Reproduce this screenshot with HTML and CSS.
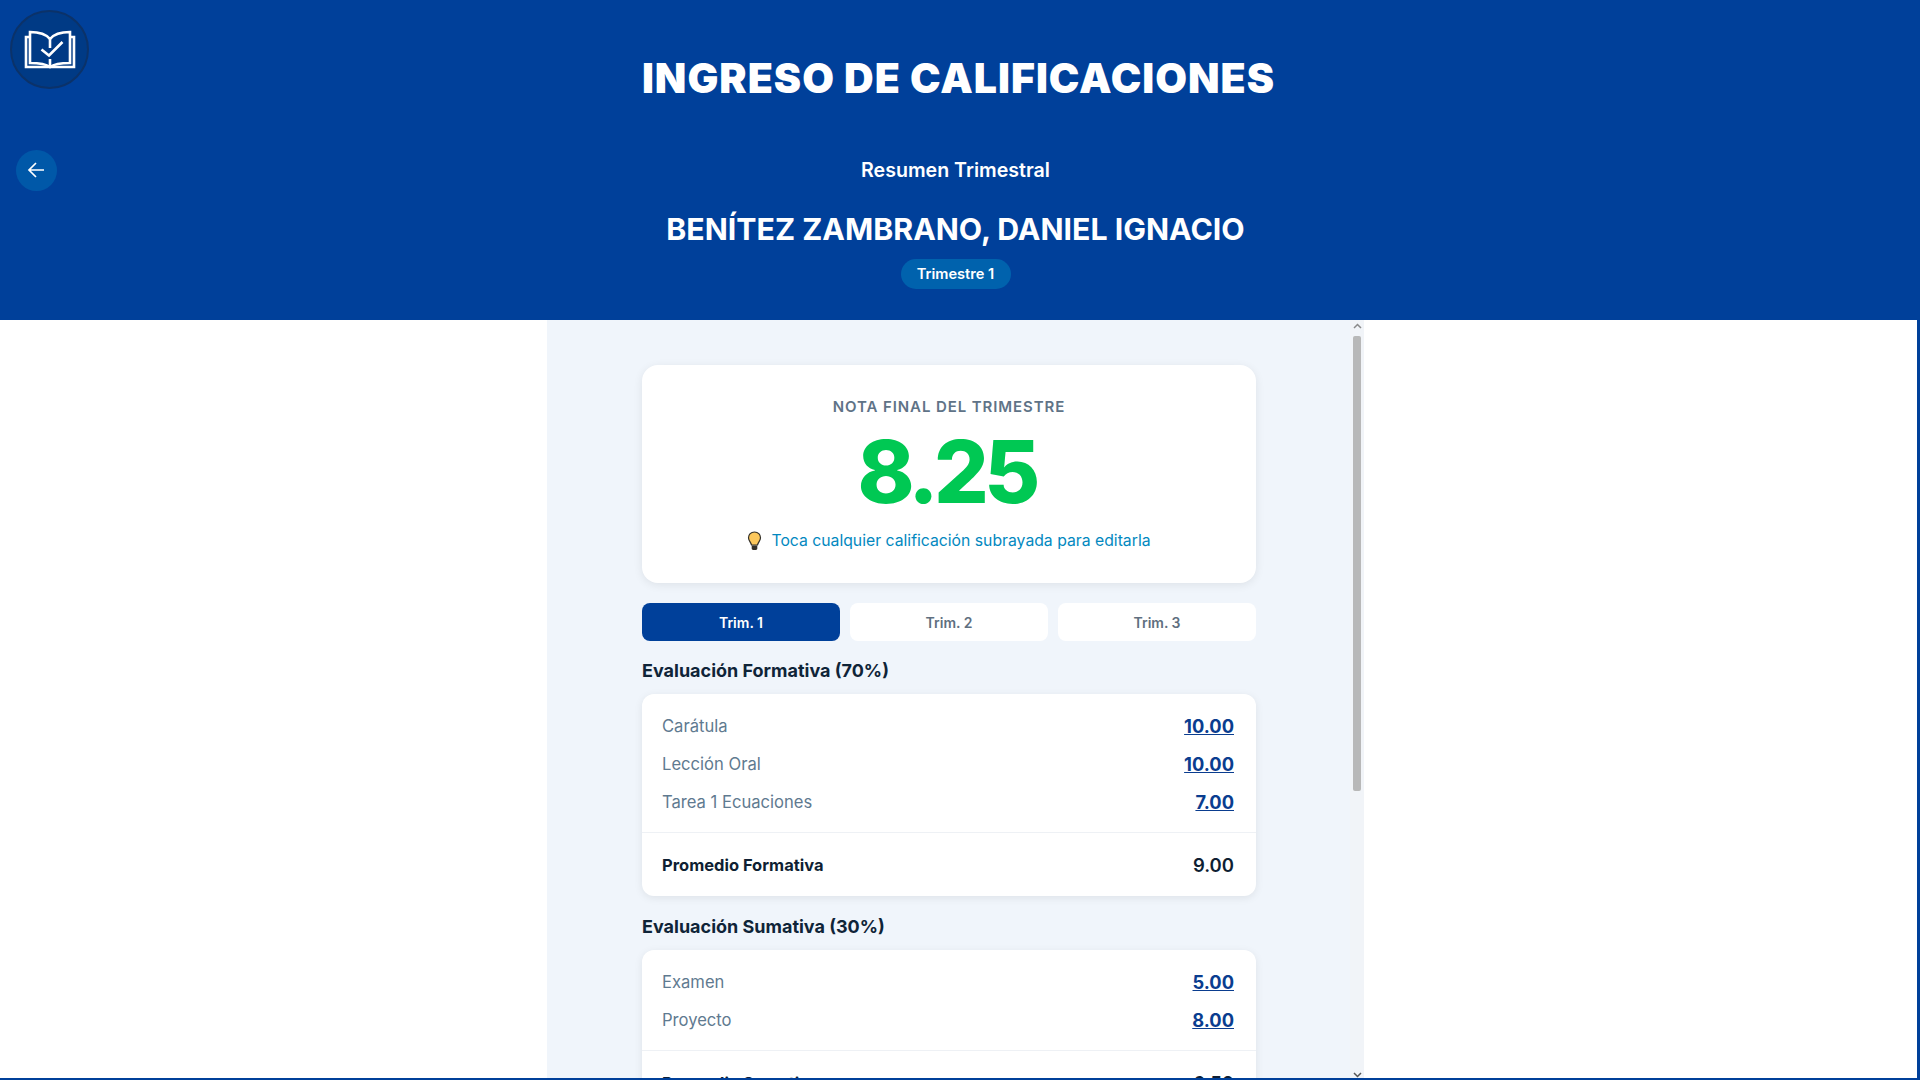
FILE: index.html
```html
<!DOCTYPE html>
<html lang="es">
<head>
  <meta charset="UTF-8">
  <meta name="viewport" content="width=device-width, initial-scale=1.0">
  <title>Ingreso de Calificaciones</title>
  <link rel="stylesheet" href="styles.css">
</head>
<body>
  <header class="top-header">
    <div class="logo">
      <svg width="52" height="40" viewBox="0 0 52 40" fill="none" stroke="#fff" stroke-width="2.6">
        <path d="M6 7H2V37H50V7H46"/>
        <path d="M26 9C22 4 15 2 6 2V33C15 33 22 34 26 37C30 34 37 33 46 33V2C37 2 30 4 26 9Z"/>
        <path d="M26 9V18M26 29V37"/>
        <path d="M17.5 19.5L25 25.5L38.5 12" stroke-width="2.6"/>
      </svg>
    </div>
    <h1 class="main-title">INGRESO DE CALIFICACIONES</h1>
    <button class="back-btn" type="button">
      <svg class="back-icon" width="17" height="16" viewBox="0 0 17 16" fill="none" stroke="#fff" stroke-width="1.7">
        <path d="M17 8H2M9 1L2 8L9 15"/>
      </svg>
    </button>
    <div class="student-info">
      <h2 class="subtitle">Resumen Trimestral</h2>
      <h3 class="student-name">BENÍTEZ ZAMBRANO, DANIEL IGNACIO</h3>
      <span class="term-badge">Trimestre 1</span>
    </div>
  </header>

  <main class="page-body">
    <section class="phone-panel">
      <div class="panel-content">
        <div class="final-card">
          <p class="final-label">NOTA FINAL DEL TRIMESTRE</p>
          <p class="final-grade">8.25</p>
          <p class="final-hint">
            <svg class="bulb" width="15" height="20" viewBox="0 0 14 20">
              <path d="M7 1C3.4 1 1 3.6 1 6.8C1 9.6 3.4 11.4 4 14H10C10.6 11.4 13 9.6 13 6.8C13 3.6 10.6 1 7 1Z" fill="#fbc75c" stroke="#33302a" stroke-width="1.2"/>
              <path d="M4.2 14.5H9.8V17.4C9.8 18.4 8.8 19 7 19C5.2 19 4.2 18.4 4.2 17.4Z" fill="#33302a"/>
            </svg>
            Toca cualquier calificación subrayada para editarla
          </p>
        </div>

        <div class="term-tabs">
          <button class="tab active" type="button">Trim. 1</button>
          <button class="tab" type="button">Trim. 2</button>
          <button class="tab" type="button">Trim. 3</button>
        </div>

        <h4 class="section-title">Evaluación Formativa (70%)</h4>
        <div class="grades-card">
          <div class="grade-list">
            <div class="grade-row"><span>Carátula</span><a class="grade-value">10.00</a></div>
            <div class="grade-row"><span>Lección Oral</span><a class="grade-value">10.00</a></div>
            <div class="grade-row"><span>Tarea 1 Ecuaciones</span><a class="grade-value">7.00</a></div>
          </div>
          <div class="average-row"><span>Promedio Formativa</span><span class="average-value">9.00</span></div>
        </div>

        <h4 class="section-title">Evaluación Sumativa (30%)</h4>
        <div class="grades-card">
          <div class="grade-list">
            <div class="grade-row"><span>Examen</span><a class="grade-value">5.00</a></div>
            <div class="grade-row"><span>Proyecto</span><a class="grade-value">8.00</a></div>
          </div>
          <div class="average-row"><span>Promedio Sumativa</span><span class="average-value">6.50</span></div>
        </div>
      </div>

      <div class="scroll-rail">
        <svg class="rail-arrow" width="9" height="6" viewBox="0 0 9 6" fill="none" stroke="#8a8a8a" stroke-width="1.5"><path d="M1 5L4.5 1.5L8 5"/></svg>
        <div class="rail-track"><div class="rail-thumb"></div></div>
        <svg class="rail-arrow" width="9" height="6" viewBox="0 0 9 6" fill="none" stroke="#555" stroke-width="1.5"><path d="M1 1L4.5 4.5L8 1"/></svg>
      </div>
    </section>
  </main>
</body>
</html>
```

FILE: styles.css
```css
* {
  box-sizing: border-box;
}

html, body {
  height: 100%;
}

body {
  margin: 0;
  padding: 0 3px 2px 0;
  display: flex;
  flex-direction: column;
  overflow: hidden;
  background: #00409a;
  font-family: "Inter", "Liberation Sans", sans-serif;
}

.top-header {
  height: 320px;
  flex-shrink: 0;
  display: grid;
  grid-template-columns: 100px 1fr;
  grid-template-rows: 100px 1fr;
  color: #fff;
}

.logo {
  grid-column: 1;
  grid-row: 1;
  width: 79px;
  height: 79px;
  margin: 10px 0 0 10px;
  display: flex;
  align-items: center;
  justify-content: center;
  background: #003a85;
  border: 2px solid #0b3269;
  border-radius: 50%;
}

.main-title {
  grid-column: 1 / -1;
  grid-row: 1;
  margin: 52px 0 0;
  text-align: center;
  font-size: 41px;
  line-height: 52px;
  font-weight: 900;
  letter-spacing: 1px;
}

.back-btn {
  grid-column: 1;
  grid-row: 2;
  width: 41px;
  height: 41px;
  margin: 50px 0 0 16px;
  padding: 0;
  display: flex;
  align-items: center;
  justify-content: center;
  background: #0058a8;
  border: none;
  border-radius: 50%;
}

.back-icon {
  margin: -1px 0 0 -2px;
}

.student-info {
  grid-column: 1 / -1;
  grid-row: 2;
  padding-right: 6px;
  display: flex;
  flex-direction: column;
  align-items: center;
}

.subtitle {
  margin: 57px 0 0;
  font-size: 19.6px;
  line-height: 26px;
  font-weight: 600;
}

.student-name {
  margin: 28px 0 0;
  font-size: 30.3px;
  line-height: 36px;
  font-weight: 700;
}

.term-badge {
  margin-top: 12px;
  width: 110px;
  height: 30px;
  display: flex;
  align-items: center;
  justify-content: center;
  background: #0062ad;
  border-radius: 15px;
  font-size: 14.6px;
  font-weight: 600;
}

.page-body {
  flex: 1;
  min-height: 0;
  display: flex;
  justify-content: center;
  padding-right: 6px;
  background: #fff;
}

.phone-panel {
  width: 817px;
  display: flex;
  background: #f0f5fb;
}

.panel-content {
  flex: 1;
  min-width: 0;
  padding: 45px 94px 0 95px;
  overflow: hidden;
}

.final-card {
  height: 218px;
  padding-top: 32px;
  background: #fff;
  border-radius: 16px;
  box-shadow: 0 2px 10px rgba(0, 0, 0, 0.08);
  text-align: center;
}

.final-label {
  margin: 0;
  font-size: 15px;
  line-height: 20px;
  font-weight: 600;
  letter-spacing: 0.9px;
  color: #5f7387;
}

.final-grade {
  margin: 4px 0 0;
  padding-right: 5px;
  font-size: 86px;
  line-height: 102px;
  font-weight: 800;
  letter-spacing: -4.6px;
  color: #00c853;
}

.final-hint {
  margin: 7px 0 0;
  display: flex;
  align-items: center;
  justify-content: center;
  gap: 9px;
  font-size: 15.75px;
  line-height: 22px;
  color: #0288c0;
}

.term-tabs {
  margin-top: 20px;
  display: flex;
  gap: 10px;
}

.tab {
  flex: 1;
  height: 38px;
  background: #fff;
  border: none;
  border-radius: 8px;
  font-family: inherit;
  font-size: 14px;
  font-weight: 600;
  color: #5f6f80;
}

.tab.active {
  background: #00409a;
  color: #fff;
}

.section-title {
  margin: 18px 0 0;
  font-size: 18px;
  line-height: 24px;
  font-weight: 700;
  color: #0f2438;
}

.grades-card {
  margin-top: 11px;
  background: #fff;
  border-radius: 12px;
  box-shadow: 0 2px 8px rgba(0, 0, 0, 0.08);
}

.grades-card + .section-title {
  margin-top: 19px;
}

.grade-list {
  padding: 13px 22px 11px 20px;
  border-bottom: 1px solid #eef1f5;
}

.grade-row {
  height: 38px;
  display: flex;
  align-items: center;
  justify-content: space-between;
  font-size: 16.6px;
  color: #5f7a90;
}

.grade-value {
  font-size: 18.3px;
  font-weight: 700;
  color: #0a3d8f;
  text-decoration: underline;
}

.average-row {
  height: 63px;
  padding: 0 22px 0 20px;
  display: flex;
  align-items: center;
  justify-content: space-between;
  font-size: 16.5px;
  font-weight: 700;
  color: #0f1f33;
}

.average-value {
  font-size: 18.5px;
  font-weight: 600;
}

.scroll-rail {
  width: 14px;
  padding: 3px 0 0;
  display: flex;
  flex-direction: column;
  align-items: center;
  background: #f1f4f8;
}

.rail-track {
  flex: 1;
  width: 100%;
  padding: 7px 3px 0 3px;
}

.rail-thumb {
  width: 8px;
  height: 455px;
  background: #b8b8b8;
  border-radius: 2px;
}

.rail-arrow {
  flex-shrink: 0;
}
```
